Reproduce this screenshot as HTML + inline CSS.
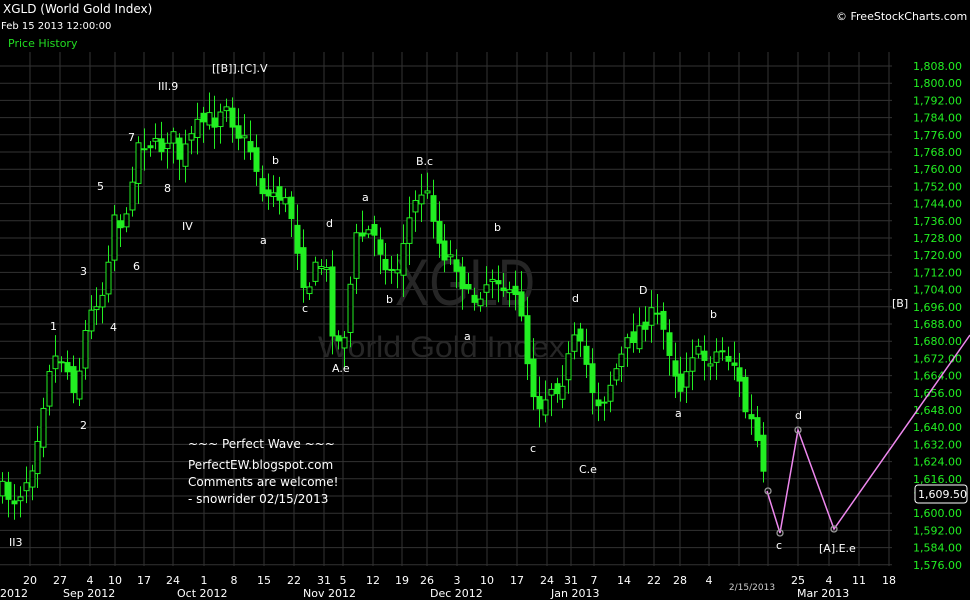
<!DOCTYPE html>
<html><head><meta charset="utf-8"><style>
html,body{margin:0;padding:0;background:#000;width:970px;height:600px;overflow:hidden}
svg{display:block}
text{font-family:"DejaVu Sans","Liberation Sans",sans-serif}
</style></head><body>
<svg id="s" width="970" height="600" viewBox="0 0 970 600" xmlns="http://www.w3.org/2000/svg">
<rect width="970" height="600" fill="#000"/>
<g id="grid" stroke="#333" stroke-width="1"></g>
<text x="395" y="305" font-size="66" fill="#262626" textLength="140" lengthAdjust="spacingAndGlyphs" style="font-family:'Liberation Sans',sans-serif">XGLD</text>
<text x="318" y="357" font-size="30" fill="#262626" textLength="247" lengthAdjust="spacingAndGlyphs" style="font-family:'Liberation Sans',sans-serif">World Gold Index</text>
<g id="candles"></g>
<text x="3" y="13" font-size="12" fill="#fff">XGLD (World Gold Index)</text>
<text x="1" y="29" font-size="10" fill="#fff">Feb 15 2013 12:00:00</text>
<text x="8" y="47" font-size="11" fill="#22dd22">Price History</text>
<text x="836" y="20" font-size="11" fill="#fff">© FreeStockCharts.com</text>
<g id="prices" font-size="11" fill="#22ee22"></g>
<rect x="915" y="485" width="52" height="18" rx="3" fill="#000" stroke="#fff"/>
<text x="918" y="498" font-size="11" fill="#fff">1,609.50</text>
<g font-size="11" fill="#fff">
<text x="158" y="90">III.9</text>
<text x="212" y="72">[[B]].[C].V</text>
<text x="128" y="141">7</text>
<text x="97" y="190">5</text>
<text x="164" y="192">8</text>
<text x="182" y="230">IV</text>
<text x="133" y="270">6</text>
<text x="80" y="275">3</text>
<text x="110" y="331">4</text>
<text x="50" y="330">1</text>
<text x="80" y="429">2</text>
<text x="9" y="546">II3</text>
<text x="272" y="164">b</text>
<text x="260" y="244">a</text>
<text x="302" y="312">c</text>
<text x="326" y="227">d</text>
<text x="362" y="201">a</text>
<text x="332" y="372">A.e</text>
<text x="386" y="303">b</text>
<text x="416" y="165">B.c</text>
<text x="464" y="340">a</text>
<text x="494" y="231">b</text>
<text x="530" y="452">c</text>
<text x="572" y="302">d</text>
<text x="579" y="473">C.e</text>
<text x="639" y="294">D</text>
<text x="675" y="417">a</text>
<text x="710" y="318">b</text>
<text x="795" y="419">d</text>
<text x="776" y="549">c</text>
<text x="819" y="552">[A].E.e</text>
<text x="892" y="307">[B]</text>
</g>
<g font-size="12" fill="#fff">
<text x="188" y="448">~~~ Perfect Wave ~~~</text>
<text x="188" y="469">PerfectEW.blogspot.com</text>
<text x="188" y="486">Comments are welcome!</text>
<text x="188" y="503">- snowrider  02/15/2013</text>
</g>
<polyline points="767,491 780,533 798,430 834,529 970,335" fill="none" stroke="#ee88ee" stroke-width="1.5"/>
<g fill="none" stroke="#999" stroke-width="1.3">
<circle cx="768" cy="491" r="3"/><circle cx="780" cy="533" r="3"/><circle cx="798" cy="430" r="3"/><circle cx="834" cy="529" r="3"/>
</g>
<g id="dates" font-size="11" fill="#fff" text-anchor="middle"></g>
<text x="752" y="590" font-size="9" fill="#ccc" text-anchor="middle">2/15/2013</text>
<g font-size="11" fill="#fff">
<text x="0" y="597">2012</text>
<text x="63" y="597">Sep 2012</text>
<text x="177" y="597">Oct 2012</text>
<text x="303" y="597">Nov 2012</text>
<text x="430" y="597">Dec 2012</text>
<text x="551" y="597">Jan 2013</text>
<text x="797" y="597">Mar 2013</text>
</g>
</svg>
<script>
(function(){
var NS="http://www.w3.org/2000/svg";
function el(p,t,a,txt){var e=document.createElementNS(NS,t);for(var k in a)e.setAttribute(k,a[k]);if(txt)e.textContent=txt;document.getElementById(p).appendChild(e);return e;}
var xs=[[30,"20"],[60,"27"],[90,"4"],[115,"10"],[144,"17"],[173,"24"],[204,"1"],[234,"8"],[264,"15"],[294,"22"],[324,"31"],[343,"5"],[373,"12"],[402,"19"],[427,"26"],[457,"3"],[487,"10"],[517,"17"],[547,"24"],[571,"31"],[594,"7"],[624,"14"],[654,"22"],[680,"28"],[709,"4"],[798,"25"],[829,"4"],[859,"11"],[889,"18"]];
xs.forEach(function(d){el("grid","line",{x1:d[0],y1:52,x2:d[0],y2:566});el("dates","text",{x:d[0],y:584},d[1]);});
[739,768].forEach(function(x){el("grid","line",{x1:x,y1:52,x2:x,y2:566});});
for(var i=0;i<30;i++){var gy=66+i*17.2;el("grid","line",{x1:0,y1:gy,x2:892,y2:gy});var p=1808-i*8;el("prices","text",{x:913,y:gy+4},p.toLocaleString("en-US")+".00");}
var W=[[0,490],[15,500],[30,470],[40,420],[50,360],[60,355],[75,390],[85,330],[95,300],[105,290],[112,210],[125,230],[135,145],[145,140],[160,150],[170,130],[180,160],[195,130],[205,120],[215,120],[225,95],[235,130],[250,150],[265,200],[275,190],[290,210],[305,290],[315,270],[325,260],[335,350],[345,330],[355,240],[370,230],[385,260],[395,280],[405,230],[420,190],[430,200],[440,250],[455,260],[470,305],[480,290],[495,270],[510,300],[520,300],[530,385],[540,405],[550,385],[560,385],[575,340],[585,360],[590,385],[600,405],[615,370],[630,340],[645,320],[655,315],[665,335],[680,390],[690,350],[705,360],[720,350],[735,365],[745,410],[755,430],[765,490]];
function at(x){for(var i=0;i<W.length-1;i++){if(x<=W[i+1][0]){var a=W[i],b=W[i+1];return a[1]+(b[1]-a[1])*(x-a[0])/(b[0]-a[0]);}}return W[W.length-1][1];}
var seed=7;function r(){seed=(seed*16807)%2147483647;return seed/2147483647;}
var prev=at(0);
for(var x=2;x<=764;x+=5.9){
 var c=at(x)+(r()-0.5)*20;var o=prev+(r()-0.5)*14;
 var bt=Math.min(o,c),bb=Math.max(o,c);if(bb-bt<2)bb=bt+2;
 var hi=bt-4-r()*18,lo=bb+4+r()*18;
 var cx=Math.round(x)+0.5;
 el("candles","line",{x1:cx,y1:hi,x2:cx,y2:lo,stroke:"#22ee22","stroke-width":1});
 if(c>o){el("candles","rect",{x:cx-3,y:bt,width:6,height:bb-bt,fill:"#22ee22"});}
 else{el("candles","rect",{x:cx-2.5,y:bt,width:5,height:bb-bt,fill:"#000",stroke:"#22ee22","stroke-width":1});}
 prev=c;
}
})();
</script>
</body></html>
